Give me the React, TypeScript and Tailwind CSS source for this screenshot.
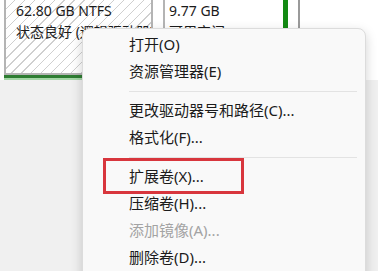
const items: { label: string; disabled?: boolean; sep?: boolean }[] = [
  { label: "打开(O)" },
  { label: "资源管理器(E)" },
  { label: "", sep: true },
  { label: "更改驱动器号和路径(C)..." },
  { label: "格式化(F)..." },
  { label: "", sep: true },
  { label: "扩展卷(X)..." },
  { label: "压缩卷(H)..." },
  { label: "添加镜像(A)...", disabled: true },
  { label: "删除卷(D)..." },
];

const hatch =
  "bg-[repeating-linear-gradient(135deg,#ffffff_0px,#ffffff_6px,#cfcfcf_6px,#cfcfcf_7px)]";

export default function App() {
  return (
    <div
      className="relative w-[378px] h-[271px] overflow-hidden bg-[#f0f0f0] text-[#1b1b1b]"
      style={{ fontFamily: '"Noto Sans", "Noto Sans CJK SC", sans-serif' }}
    >
      {/* Disk partitions strip */}
      <div className="flex h-[80px] bg-white">
        <div className="w-[4px]" />
        <div className="flex flex-col w-[149px]">
          <div className={`flex-1 overflow-hidden whitespace-nowrap border-l-2 border-r-2 border-[#b4b4b4] ${hatch} pl-[10px] text-[14px] leading-[21px]`}>
            <div>62.80 GB NTFS</div>
            <div>状态良好 (逻辑驱动器)</div>
          </div>
          <div className="h-[2px] bg-[#b4b4b4]" />
          <div className="h-[3px] bg-[#2e7d32]" />
          <div className="h-[2px] bg-[#a5d6a7]" />
        </div>
        <div className="w-[10px]" />
        <div className="flex flex-col w-[120px]">
          <div className="flex-1 overflow-hidden whitespace-nowrap border-l-2 border-[#b4b4b4] pl-[4px] text-[14px] leading-[21px]">
            <div>9.77 GB</div>
            <div>可用空间</div>
          </div>
        </div>
        <div className="w-[5px] bg-[#138a13]" />
        <div className="w-[10px]" />
        <div className="w-[2px] bg-[#9a9a9a]" />
        <div className="flex-1" />
      </div>

      {/* Context menu */}
      <div className="absolute left-[82px] top-[28px] w-[284px] h-[260px] rounded-[8px] border border-[#dcdcdc] bg-[#f9f9f9] shadow-[0_4px_12px_rgba(0,0,0,0.18)] pt-[2px]">
        {items.map((it, i) =>
          it.sep ? (
            <div key={i} className="h-[12px] flex items-center pl-[46px] pr-[8px]">
              <div className="h-px w-full bg-[#e3e3e3]" />
            </div>
          ) : (
            <div
              key={i}
              className={`h-[27px] flex items-center pl-[46px] text-[15px] ${
                it.disabled ? "text-[#a3a3a3]" : "text-[#1b1b1b]"
              }`}
            >
              {it.label}
            </div>
          )
        )}
      </div>

      {/* Highlight box */}
      <div className="absolute left-[103px] top-[158px] w-[141px] h-[36px] border-[3px] border-[#d8363d]" />
    </div>
  );
}
